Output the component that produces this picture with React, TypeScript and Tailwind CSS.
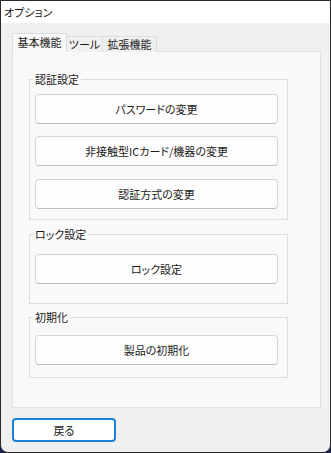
const font = "font-['Noto_Sans_CJK_JP','Noto_Sans',sans-serif] [font-feature-settings:'palt']";

function WinButton({ label, className = "" }: { label: string; className?: string }) {
  return (
    <div
      className={`flex h-[30px] w-[243px] items-center justify-center rounded-[4px] border border-[#d6d6d6] border-b-[#bdbdbd] bg-[#fdfdfd] text-[11px] text-[#1b1b1b] ${className}`}
    >
      {label}
    </div>
  );
}

function Group({
  title,
  children,
  className = "",
}: {
  title: string;
  children: React.ReactNode;
  className?: string;
}) {
  return (
    <fieldset className={`w-[259px] border border-[#dcdcdc] px-[5px] ${className}`}>
      <legend className="-ml-[2px] px-[2px] text-[11px] leading-[16px] text-[#1b1b1b]">{title}</legend>
      {children}
    </fieldset>
  );
}

export default function App() {
  return (
    <div className={`h-[453px] w-[331px] bg-[#1e2150] ${font}`}>
      <div className="flex h-full flex-col overflow-hidden rounded-b-[8px] border border-[#2a2a2a] bg-[#f0f0f0]">
        {/* title bar */}
        <div className="flex h-[22px] items-center bg-white pl-[3px] text-[11px] text-[#1b1b1b]">
          オプション
        </div>

        <div className="flex flex-1 flex-col pl-[11px] pt-[10px]">
          {/* tabs */}
          <div className="relative z-10 flex h-[19px] items-end">
            <div className="flex h-[19px] w-[55px] items-center justify-center border border-b-0 border-[#dcdcdc] bg-[#f9f9f9] pb-[1px] text-[11px] text-[#1b1b1b]">
              基本機能
            </div>
            <div className="flex h-[16px] w-[36px] items-center justify-center border border-l-0 border-b-0 border-[#dcdcdc] bg-[#f0f0f0] text-[11px] text-[#1b1b1b]">
              ツール
            </div>
            <div className="flex h-[16px] w-[54px] items-center justify-center border border-l-0 border-b-0 border-[#dcdcdc] bg-[#f0f0f0] text-[11px] text-[#1b1b1b]">
              拡張機能
            </div>
          </div>

          {/* panel */}
          <div className="-mt-px h-[357px] w-[309px] border border-[#e2e2e2] bg-[#f9f9f9] pl-[16px] pt-[19px]">
            <Group title="認証設定" className="pb-[10px] pt-[7px]">
              <WinButton label="パスワードの変更" />
              <WinButton label="非接触型ICカード/機器の変更" className="mt-[12px]" />
              <WinButton label="認証方式の変更" className="mt-[13px]" />
            </Group>

            <Group title="ロック設定" className="mt-[6px] pb-[19px] pt-[12px]">
              <WinButton label="ロック設定" />
            </Group>

            <Group title="初期化" className="mt-[5px] pb-[12px] pt-[10px]">
              <WinButton label="製品の初期化" />
            </Group>
          </div>

          <div className="mt-[10px] flex h-[24px] w-[104px] items-center justify-center rounded-[4px] border-2 border-[#1f7fd6] bg-white text-[11px] text-[#1b1b1b]">
            戻る
          </div>
        </div>
      </div>
    </div>
  );
}
